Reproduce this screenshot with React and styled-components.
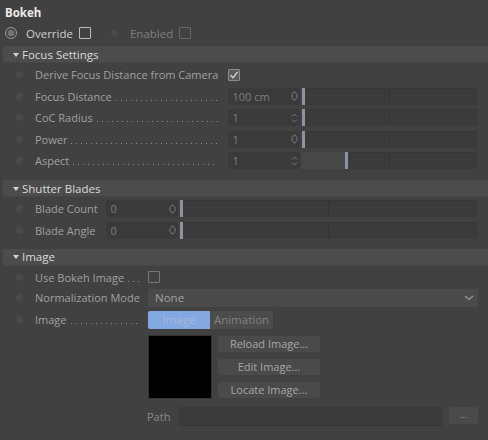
import React from 'react';
import styled, { createGlobalStyle } from 'styled-components';

const GlobalStyle = createGlobalStyle`
  html, body {
    margin: 0;
    padding: 0;
    background: #414141;
  }
  body {
    font-family: 'Open Sans', 'Noto Sans', sans-serif;
    font-size: 11px;
    color: #a2a2a2;
  }
`;

const Panel = styled.div`
  width: 488px;
  height: 440px;
  overflow: hidden;
  background: #414141;
`;

const Title = styled.div`
  height: 24px;
  display: flex;
  align-items: center;
  padding-left: 5px;
  font-weight: 700;
  font-size: 11.5px;
  color: #ececec;
`;

const TopRow = styled.div`
  height: 18px;
  display: flex;
  align-items: center;
  padding-left: 5px;
`;

const Radio = styled.span`
  width: 12px;
  height: 12px;
  box-sizing: border-box;
  border-radius: 50%;
  border: 1.5px solid #9a9a9a;
  background: radial-gradient(circle, #737373 0 3px, #454545 3.6px);
  margin-right: 9px;
`;

const TopLabel = styled.span`
  color: ${(p) => (p.$dim ? '#7e7e7e' : '#cfcfcf')};
  font-size: 11.5px;
  margin-right: 6px;
`;

const Check = styled.span`
  width: 12px;
  height: 12px;
  box-sizing: border-box;
  border: 1px solid ${(p) => p.$color || '#8a8a8a'};
  border-radius: 1px;
  display: flex;
  align-items: center;
  justify-content: center;
  background: ${(p) => (p.$on ? '#5c5c5c' : 'transparent')};
  margin-right: ${(p) => p.$mr || 0}px;
`;

const Dot = styled.span`
  flex: none;
  width: 7px;
  height: 7px;
  border-radius: 50%;
  background: #4a4a4a;
  margin: ${(p) => p.$m || '0 12.5px 0 15.5px'};
`;

const Group = styled.div`
  margin-top: ${(p) => p.$mt}px;
`;

const GroupHead = styled.div`
  height: 17px;
  margin-left: 3px;
  display: flex;
  align-items: center;
  background: #4c4c4c;
  border-bottom: 1px solid #464646;
  box-sizing: border-box;
  color: #dadada;
  font-size: 11.5px;
  margin-bottom: 1px;
`;

const Arrow = styled.span`
  width: 0;
  height: 0;
  border-left: 3.5px solid transparent;
  border-right: 3.5px solid transparent;
  border-top: 4px solid #d4d4d4;
  margin: 1px 3px 0 10px;
`;

const Row = styled.div`
  display: grid;
  grid-template-columns: ${(p) => p.$label}px 1fr;
  align-items: center;
  height: ${(p) => p.$h || 21.5}px;
  padding-right: 10px;
`;

const LabelCell = styled.div`
  display: flex;
  align-items: center;
  padding-right: ${(p) => p.$pr || 0}px;
  white-space: nowrap;
  overflow: hidden;
`;

const Label = styled.span`
  color: #a0a0a0;
`;

const Leader = styled.span`
  flex: 1;
  height: 1px;
  align-self: center;
  margin: 8px 0 0 4px;
  background-image: linear-gradient(to right, #8c8c8c 1px, transparent 1px);
  background-size: 5px 1px;
`;

const Field = styled.div`
  display: flex;
  align-items: center;
  gap: ${(p) => p.$gap || 2}px;
`;

const NumBox = styled.div`
  width: 72.5px;
  height: 17px;
  flex: none;
  box-sizing: border-box;
  display: flex;
  align-items: center;
  justify-content: space-between;
  padding: 0 2px 0 5px;
  background: #3a3a3a;
  border-radius: 2px;
  color: #7d7d7d;
`;

const Slider = styled.div`
  flex: 1;
  height: 17px;
  display: flex;
  border-radius: 2px;
  background: linear-gradient(
      to right,
      transparent calc(50% - 0.5px),
      #343434 calc(50% - 0.5px),
      #343434 calc(50% + 0.5px),
      transparent calc(50% + 0.5px)
    ),
    #3b3b3b;
  box-shadow: inset 0 1px 0 #363636;
`;

const Fill = styled.div`
  height: 100%;
  background: #474747;
`;

const Knob = styled.div`
  width: 3px;
  height: 100%;
  background: #8c93a4;
`;

const Spin = ({ joined }) => (
  <svg width="7" height="12" viewBox="0 0 7 12" fill="none" stroke="#7c7c7c" strokeWidth="1">
    {joined ? (
      <path d="M1 4.5 L3.5 1.5 L6 4.5 V7.5 L3.5 10.5 L1 7.5 Z" strokeLinejoin="round" />
    ) : (
      <path d="M1 4.5 L3.5 2 L6 4.5 M1 7.5 L3.5 10 L6 7.5" />
    )}
  </svg>
);

const Select = styled.div`
  height: 18px;
  box-sizing: border-box;
  display: flex;
  align-items: center;
  justify-content: space-between;
  padding: 0 4px 0 7px;
  background: #4a4a4a;
  border-radius: 2px;
  color: #a0a0a0;
  font-size: 11.5px;
`;

const Tabs = styled.div`
  display: flex;
  height: 18px;
`;

const Tab = styled.div`
  width: ${(p) => p.$w}px;
  display: flex;
  align-items: center;
  justify-content: center;
  background: ${(p) => (p.$active ? '#84a8e1' : '#4c4c4c')};
  color: ${(p) => (p.$active ? '#a4b8d9' : '#838383')};
  border-radius: ${(p) => (p.$active ? '2px 0 0 2px' : '0 2px 2px 0')};
  font-size: 11.5px;
`;

const ImageBlock = styled.div`
  display: flex;
  gap: 6px;
  margin: 5px 0 0 148px;
`;

const Preview = styled.div`
  width: 64px;
  height: 64px;
  background: #000;
  border: 1px solid #333;
  box-sizing: border-box;
`;

const Buttons = styled.div`
  display: flex;
  flex-direction: column;
  gap: 7px;
  padding-top: 1px;
`;

const Button = styled.div`
  width: 102px;
  height: 16px;
  display: flex;
  align-items: center;
  justify-content: center;
  background: #4a4a4a;
  border-radius: 2px;
  color: #a6a6a6;
`;

const PathRow = styled.div`
  display: flex;
  align-items: center;
  gap: 7px;
  margin: 8px 10px 0 147px;
  height: 19px;
`;

const PathLabel = styled.span`
  width: 24px;
  color: #8a8a8a;
`;

const PathInput = styled.div`
  flex: 1;
  height: 19px;
  background: #3b3b3b;
  border-radius: 2px;
  box-shadow: inset 0 -1px 0 #363636;
`;

const DotsButton = styled.div`
  width: 29px;
  height: 17px;
  align-self: flex-start;
  display: flex;
  align-items: center;
  justify-content: center;
  background: #4a4a4a;
  border-radius: 2px;
  color: #9a9a9a;
  font-size: 9px;
  padding-bottom: 2px;
  box-sizing: border-box;
`;

const focusRows = [
  { label: 'Focus Distance', value: '100 cm', pos: 0, joined: true },
  { label: 'CoC Radius', value: '1', pos: 0 },
  { label: 'Power', value: '1', pos: 0, joined: true },
  { label: 'Aspect', value: '1', pos: 43 },
];

const bladeRows = [
  { label: 'Blade Count', value: '0' },
  { label: 'Blade Angle', value: '0' },
];

function NumberSlider({ value, pos, joined }) {
  return (
    <Field>
      <NumBox>
        <span>{value}</span>
        <Spin joined={joined} />
      </NumBox>
      <Slider>
        <Fill style={{ width: pos }} />
        <Knob />
      </Slider>
    </Field>
  );
}

export default function App() {
  return (
    <Panel>
      <GlobalStyle />
      <Title>Bokeh</Title>
      <TopRow>
        <Radio />
        <TopLabel>Override</TopLabel>
        <Check $color="#bdbdbd" $mr={20} />
        <Dot $m="0 12px 0 0" />
        <TopLabel $dim>Enabled</TopLabel>
        <Check $color="#666" />
      </TopRow>

      <Group $mt={4}>
        <GroupHead>
          <Arrow />
          Focus Settings
        </GroupHead>
        <Row $label={227.5}>
          <LabelCell>
            <Dot />
            <Label>Derive Focus Distance from Camera</Label>
          </LabelCell>
          <Field>
            <Check $on $color="#8c8c8c">
              <svg width="10" height="10" viewBox="0 0 10 10">
                <path d="M1.5 5.2 L4 7.8 L8.6 2" fill="none" stroke="#cfcfcf" strokeWidth="1.4" />
              </svg>
            </Check>
          </Field>
        </Row>
        {focusRows.map((r) => (
          <Row key={r.label} $label={227.5}>
            <LabelCell $pr={10}>
              <Dot />
              <Label>{r.label}</Label>
              <Leader />
            </LabelCell>
            <NumberSlider value={r.value} pos={r.pos} joined={r.joined} />
          </Row>
        ))}
      </Group>

      <Group $mt={8.5}>
        <GroupHead>
          <Arrow />
          Shutter Blades
        </GroupHead>
        {bladeRows.map((r) => (
          <Row key={r.label} $label={105.5}>
            <LabelCell>
              <Dot />
              <Label>{r.label}</Label>
            </LabelCell>
            <NumberSlider value={r.value} pos={0} joined />
          </Row>
        ))}
      </Group>

      <Group $mt={7.5}>
        <GroupHead>
          <Arrow />
          Image
        </GroupHead>
        <Row $label={148} $h={21}>
          <LabelCell $pr={8}>
            <Dot />
            <Label>Use Bokeh Image</Label>
            <Leader />
          </LabelCell>
          <Field>
            <Check $color="#777" />
          </Field>
        </Row>
        <Row $label={148} $h={20}>
          <LabelCell>
            <Dot />
            <Label>Normalization Mode</Label>
          </LabelCell>
          <Select>
            None
            <svg width="10" height="6" viewBox="0 0 10 6">
              <path d="M1 1 L5 4.5 L9 1" fill="none" stroke="#9a9a9a" strokeWidth="1.2" />
            </svg>
          </Select>
        </Row>
        <Row $label={148} $h={20} style={{ marginTop: 2 }}>
          <LabelCell $pr={8}>
            <Dot />
            <Label>Image</Label>
            <Leader />
          </LabelCell>
          <Tabs>
            <Tab $active $w={62}>Image</Tab>
            <Tab $w={63}>Animation</Tab>
          </Tabs>
        </Row>
        <ImageBlock>
          <Preview />
          <Buttons>
            <Button>Reload Image...</Button>
            <Button>Edit Image...</Button>
            <Button>Locate Image...</Button>
          </Buttons>
        </ImageBlock>
        <PathRow>
          <PathLabel>Path</PathLabel>
          <PathInput />
          <DotsButton>...</DotsButton>
        </PathRow>
      </Group>
    </Panel>
  );
}
